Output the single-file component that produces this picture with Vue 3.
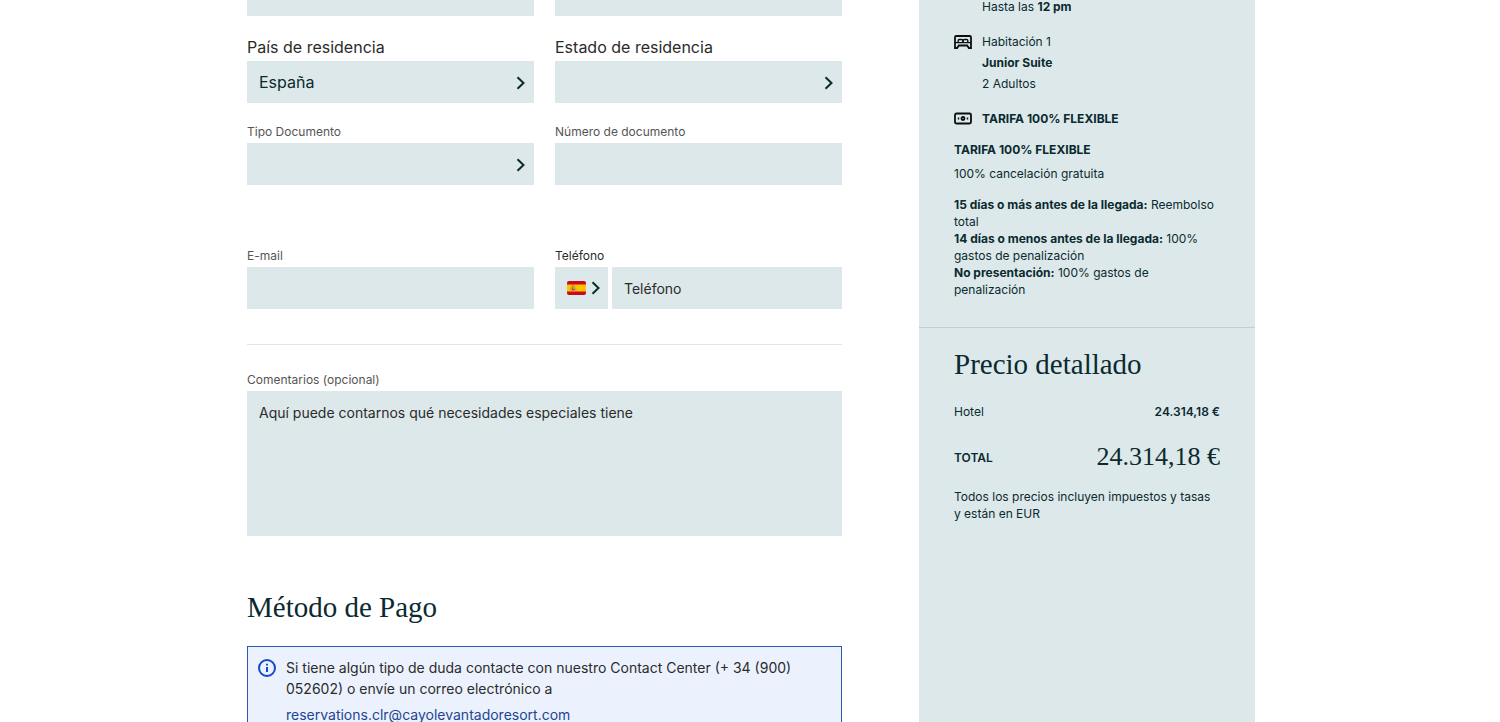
<template>
  <div class="page">
    <div class="container">
      <form class="booking-form" @submit.prevent>
        <div class="row">
          <input v-model="form.address" type="text" class="field" aria-label="Dirección">
          <input v-model="form.city" type="text" class="field" aria-label="Ciudad">
        </div>

        <div class="row residence">
          <div v-for="select in residence" :key="select.id" class="group">
            <label :for="select.id" class="label-large">{{ select.label }}</label>
            <div class="select-wrap">
              <select :id="select.id" v-model="form[select.id]" class="field">
                <option v-for="option in select.options" :key="option" :value="option">{{ option }}</option>
              </select>
              <svg class="chevron" viewBox="0 0 10 14"><path d="M1.500 1.300 7.500 7 1.500 12.700" /></svg>
            </div>
          </div>
        </div>

        <div class="row document">
          <div class="group">
            <label for="docType" class="label">Tipo Documento</label>
            <div class="select-wrap">
              <select id="docType" v-model="form.docType" class="field">
                <option value=""></option>
              </select>
              <svg class="chevron" viewBox="0 0 10 14"><path d="M1.500 1.300 7.500 7 1.500 12.700" /></svg>
            </div>
          </div>
          <div class="group">
            <label for="docNumber" class="label">Número de documento</label>
            <input id="docNumber" v-model="form.docNumber" type="text" class="field">
          </div>
        </div>

        <div class="row contact">
          <div class="group">
            <label for="email" class="label">E-mail</label>
            <input id="email" v-model="form.email" type="email" class="field">
          </div>
          <div class="group">
            <label for="phone" class="label label-dark">Teléfono</label>
            <div class="phone">
              <button type="button" class="prefix" aria-label="+34">
                <svg class="flag" viewBox="0 0 19 14">
                  <rect width="19" height="14" rx="2" fill="#c60b1e" />
                  <rect y="3.5" width="19" height="7" fill="#ffc400" />
                  <path d="M3.800 6.200v3.600M8.800 6.200v3.600" stroke="#a9988a" stroke-width="1" />
                  <path d="M4.800 6.200h3v2.600q-1.500 2-3 0z" fill="#c8452c" />
                  <path d="M6.300 6.200h1.500v1.500H6.300z" fill="#d9c3c0" />
                  <path d="M4.800 5.400q1.500-1.400 3 0" fill="none" stroke="#a3562a" stroke-width=".9" />
                </svg>
                <svg class="chevron-inline" viewBox="0 0 10 14"><path d="M1.500 1.300 7.500 7 1.500 12.700" /></svg>
              </button>
              <input id="phone" v-model="form.phone" type="tel" class="field" placeholder="Teléfono">
            </div>
          </div>
        </div>

        <hr class="divider">

        <div class="group">
          <label for="comments" class="label">Comentarios (opcional)</label>
          <textarea
            id="comments"
            v-model="form.comments"
            class="field comments"
            placeholder="Aquí puede contarnos qué necesidades especiales tiene"
          ></textarea>
        </div>

        <h2 class="title payment-title">Método de Pago</h2>
        <div class="notice">
          <svg class="info" viewBox="0 0 18 18">
            <circle cx="9" cy="9" r="8" />
            <path d="M9 8v5M9 4.800v1.700" />
          </svg>
          <div>
            <p>Si tiene algún tipo de duda contacte con nuestro Contact Center (+ 34 (900) 052602) o envíe un correo electrónico a</p>
            <a href="mailto:reservations.clr@cayolevantadoresort.com">reservations.clr@cayolevantadoresort.com</a>
          </div>
        </div>
      </form>

      <aside class="summary">
        <section class="details">
          <div class="detail">
            <span></span>
            <div>Hasta las <strong>12 pm</strong></div>
          </div>
          <div class="detail">
            <svg class="icon" viewBox="0 0 18 18">
              <path d="M1 15V4.300Q1 3 2.300 3h13.400Q17 3 17 4.300V15h-2.200l-1.600-2.500H4.800L3.200 15z" />
              <path class="thin" d="M1 9.600h16M4.200 9.300V7.600q0-1.100 1.100-1.100h2.300q1.200 0 1.200 1.100v1.700M9.200 9.300V7.600q0-1.100 1.200-1.100h2.300q1.100 0 1.100 1.100v1.700" />
            </svg>
            <div>
              <div>Habitación 1</div>
              <div><strong>Junior Suite</strong></div>
              <div>2 Adultos</div>
            </div>
          </div>
          <div class="detail">
            <svg class="icon" viewBox="0 0 18 18">
              <rect x="1" y="3.500" width="16" height="10" rx="1.500" />
              <circle cx="9" cy="8.500" r="1.500" />
              <path d="M3.800 8.500h1.400M12.800 8.500h1.400" />
            </svg>
            <strong>TARIFA 100% FLEXIBLE</strong>
          </div>
          <div class="rate"><strong>TARIFA 100% FLEXIBLE</strong></div>
          <p class="cancel">100% cancelación gratuita</p>
          <div class="policy">
            <p v-for="rule in rules" :key="rule.when"><strong>{{ rule.when }}</strong> {{ rule.charge }}</p>
          </div>
        </section>

        <section class="price">
          <h2 class="title">Precio detallado</h2>
          <div class="price-line">
            <span>Hotel</span>
            <strong>{{ total }}</strong>
          </div>
          <div class="price-line total">
            <strong>TOTAL</strong>
            <span class="title amount">{{ total }}</span>
          </div>
          <p class="taxes">Todos los precios incluyen impuestos y tasas y están en EUR</p>
        </section>
      </aside>
    </div>
  </div>
</template>

<script setup>
import { reactive } from 'vue';

const form = reactive({
  address: '',
  city: '',
  country: 'España',
  state: '',
  docType: '',
  docNumber: '',
  email: '',
  phone: '',
  comments: ''
});

const residence = [
  { id: 'country', label: 'País de residencia', options: ['España'] },
  { id: 'state', label: 'Estado de residencia', options: [''] }
];

const rules = [
  { when: '15 días o más antes de la llegada:', charge: 'Reembolso total' },
  { when: '14 días o menos antes de la llegada:', charge: '100% gastos de penalización' },
  { when: 'No presentación:', charge: '100% gastos de penalización' }
];

const total = '24.314,18 €';
</script>

<style>
body {
  margin: 0;
  background: #fff;
}
</style>

<style scoped>
.page {
  height: 100vh;
  overflow: hidden;
  font-family: Inter, "Liberation Sans", sans-serif;
  color: #0b2a2f;
}

.page *,
.page {
  box-sizing: border-box;
}

.container {
  display: grid;
  grid-template-columns: minmax(0, 595fr) minmax(0, 336fr);
  gap: 77px;
  max-width: 1010px;
  min-height: 100%;
  margin: 0 auto;
  padding-left: 2px;
}

p,
h2 {
  margin: 0;
}

/* The page is shown scrolled, so the first row is cut by the top edge */
.booking-form {
  margin-top: -26px;
}

.row {
  display: grid;
  grid-template-columns: 1fr 1fr;
  gap: 21px;
}

.residence {
  margin-top: 21px;
}

.document {
  margin-top: 20px;
}

.contact {
  margin-top: 62px;
}

.group {
  display: flex;
  flex-direction: column;
  min-width: 0;
}

.label-large {
  margin-bottom: 4px;
  font-size: 16px;
  line-height: 20px;
  color: #2b2b2b;
}

.label {
  margin-bottom: 2px;
  font-size: 12px;
  line-height: 18px;
  color: #555;
}

.label-dark {
  color: #2b2b2b;
}

.field {
  width: 100%;
  min-width: 0;
  height: 42px;
  padding: 0 12px;
  border: none;
  border-radius: 0;
  outline: none;
  appearance: none;
  background: #dde8ea;
  font-family: inherit;
  font-size: 16px;
  color: #0b2a2f;
}

.field::placeholder {
  font-size: 14px;
  color: #2b2b2b;
  opacity: 1;
}

.select-wrap {
  position: relative;
  display: flex;
}

.chevron {
  position: absolute;
  top: 15px;
  right: 8px;
  width: 10px;
  height: 14px;
  pointer-events: none;
}

.chevron,
.chevron-inline {
  fill: none;
  stroke: #0b2a2f;
  stroke-width: 2;
}

.phone {
  display: flex;
  gap: 4px;
}

.prefix {
  display: flex;
  flex: none;
  align-items: center;
  gap: 5px;
  width: 53px;
  height: 42px;
  padding: 0 0 0 12px;
  border: none;
  background: #dde8ea;
  cursor: pointer;
}

.flag {
  width: 19px;
  height: 14px;
}

.chevron-inline {
  width: 10px;
  height: 14px;
}

.divider {
  height: 1px;
  margin: 35px 0 26px;
  border: none;
  background: #e4e6e7;
}

.comments {
  height: 145px;
  padding: 12px;
  line-height: 20px;
  resize: none;
}

.title {
  font-family: "Liberation Serif", serif;
  font-size: 29px;
  font-weight: 400;
  line-height: 34px;
}

.payment-title {
  margin: 54px 0 22px;
}

.notice {
  display: flex;
  gap: 10px;
  padding: 10px;
  border: 1px solid #2f57b5;
  background: #ebf2fe;
  font-size: 14px;
  line-height: 21px;
  color: #2b2b2b;
}

.notice a {
  display: block;
  margin-top: 5px;
  color: #1f4590;
  text-decoration: none;
}

.info {
  flex: none;
  width: 18px;
  height: 18px;
  margin-top: 2px;
  fill: none;
  stroke: #1448c8;
  stroke-width: 2;
}

.summary {
  background: #dde8ea;
  font-size: 12px;
  line-height: 21px;
}

.details {
  margin-top: -4px;
  padding: 0 35px 29px;
  border-bottom: 1px solid #c2cfd1;
}

.detail {
  display: grid;
  grid-template-columns: 18px 1fr;
  gap: 10px;
  margin-bottom: 14px;
}

.icon {
  width: 18px;
  height: 18px;
  margin-top: 2px;
  fill: none;
  stroke: #0a0f10;
  stroke-width: 1.800;
}

.icon .thin {
  stroke-width: 1.400;
}

.rate {
  margin-top: -4px;
}

.cancel {
  margin: 5px 0 14px;
  line-height: 17px;
}

.policy {
  line-height: 17px;
}

strong {
  font-weight: 700;
}

.price {
  padding: 19px 35px;
}

.price-line {
  display: flex;
  justify-content: space-between;
  align-items: center;
  margin-top: 20px;
}

.total {
  margin: 18px 0 14px;
}

.price-line strong {
  font-weight: 600;
}

.amount {
  font-size: 26px;
}

.taxes {
  line-height: 17px;
}
</style>
